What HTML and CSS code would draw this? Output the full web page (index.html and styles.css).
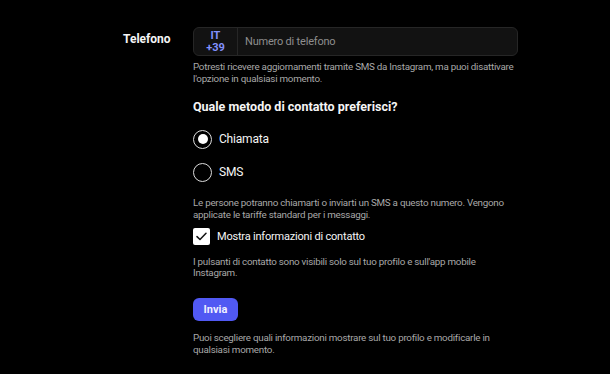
FILE: index.html
```html
<!DOCTYPE html>
<html lang="it">
<head>
    <meta charset="UTF-8">
    <title>Telefono</title>
    <link rel="stylesheet" href="styles.css">
</head>
<body>
    <div class="form-row">
        <label class="field-label" for="phone">Telefono</label>
        <div class="field-body">
            <div class="phone-input">
                <div class="prefix">
                    <span>IT</span>
                    <span>+39</span>
                </div>
                <input id="phone" type="text" placeholder="Numero di telefono">
            </div>
            <p class="hint hint-phone">Potresti ricevere aggiornamenti tramite SMS da Instagram, ma puoi disattivare l'opzione in qualsiasi momento.</p>

            <h3 class="question">Quale metodo di contatto preferisci?</h3>

            <label class="radio-row">
                <span class="radio checked"></span>
                <span>Chiamata</span>
            </label>
            <label class="radio-row">
                <span class="radio"></span>
                <span>SMS</span>
            </label>

            <p class="hint hint-radio">Le persone potranno chiamarti o inviarti un SMS a questo numero. Vengono applicate le tariffe standard per i messaggi.</p>

            <label class="check-row">
                <span class="checkbox">
                    <svg width="11" height="9" viewBox="0 0 11 9"><path d="M1 4.6 L4 7.5 L10 1.3" fill="none" stroke="#111" stroke-width="1.5" stroke-linecap="round" stroke-linejoin="round"/></svg>
                </span>
                <span>Mostra informazioni di contatto</span>
            </label>

            <p class="hint hint-check">I pulsanti di contatto sono visibili solo sul tuo profilo e sull'app mobile Instagram.</p>

            <button class="submit-btn">Invia</button>

            <p class="hint hint-submit">Puoi scegliere quali informazioni mostrare sul tuo profilo e modificarle in qualsiasi momento.</p>
        </div>
    </div>
</body>
</html>
```

FILE: styles.css
```css
body {
    background-color: #000;
    color: #f5f5f5;
    font-family: Roboto, "Liberation Sans", Arial, sans-serif;
    margin: 0;
    padding-top: 27px;
}
.form-row {
    display: flex;
    padding-left: 123px;
}
.field-label {
    width: 70px;
    font-size: 12px;
    font-weight: bold;
    padding-top: 5px;
    color: #f5f5f5;
}
.field-body {
    width: 325px;
}
.phone-input {
    display: flex;
    height: 29px;
    box-sizing: border-box;
    background-color: #121212;
    border: 1px solid #262626;
    border-radius: 6px;
}
.prefix {
    width: 43px;
    border-right: 1px solid #262626;
    display: flex;
    flex-direction: column;
    align-items: center;
    justify-content: center;
    color: #8391ff;
    font-size: 11px;
    font-weight: bold;
    line-height: 12px;
}
.phone-input input {
    flex: 1;
    background: transparent;
    border: none;
    outline: none;
    color: #f5f5f5;
    font-family: inherit;
    font-size: 11px;
    letter-spacing: -0.2px;
    padding: 0 7px;
}
.phone-input input::placeholder {
    color: #8e8e8e;
}
.hint {
    color: #a8a8a8;
    font-size: 9.8px;
    letter-spacing: -0.25px;
    line-height: 11.5px;
    margin: 0;
}
.hint-phone {
    margin-top: 5px;
}
.question {
    font-size: 12.5px;
    font-weight: bold;
    margin: 15px 0 0;
    line-height: 16px;
}
.radio-row {
    display: flex;
    align-items: center;
    gap: 7px;
    font-size: 12px;
    letter-spacing: -0.2px;
    height: 20px;
}
.radio-row:first-of-type {
    margin-top: 14px;
}
.radio-row + .radio-row {
    margin-top: 13px;
}
.radio {
    width: 19px;
    height: 19px;
    box-sizing: border-box;
    border: 1.5px solid #dbdbdb;
    border-radius: 50%;
    display: flex;
    align-items: center;
    justify-content: center;
}
.radio.checked::after {
    content: "";
    width: 10px;
    height: 10px;
    border-radius: 50%;
    background-color: #fff;
}
.hint-radio {
    margin-top: 15px;
}
.check-row {
    display: flex;
    align-items: center;
    gap: 7px;
    font-size: 11px;
    letter-spacing: -0.2px;
    margin-top: 8px;
}
.checkbox {
    width: 17px;
    height: 17px;
    background-color: #fff;
    border-radius: 2px;
    display: flex;
    align-items: center;
    justify-content: center;
}
.hint-check {
    margin-top: 11px;
    line-height: 11px;
}
.submit-btn {
    display: block;
    margin-top: 20px;
    width: 45px;
    height: 23px;
    border: none;
    border-radius: 6px;
    background-color: #5159f3;
    color: #f0f0ff;
    font-family: inherit;
    font-size: 11px;
    font-weight: bold;
    cursor: pointer;
}
.hint-submit {
    margin-top: 11px;
}
```
